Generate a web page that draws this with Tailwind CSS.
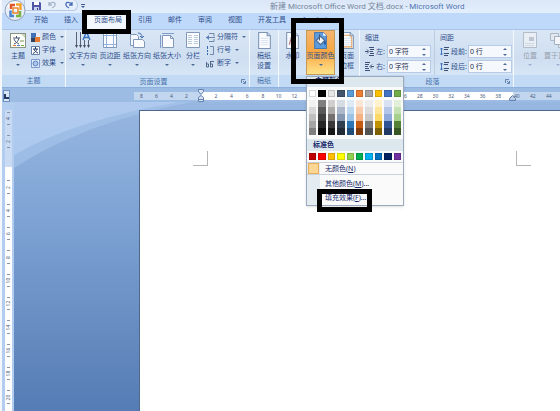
<!DOCTYPE html>
<html lang="zh-CN">
<head>
<meta charset="utf-8">
<title>新建 Microsoft Office Word 文档.docx - Microsoft Word</title>
<script src="https://cdn.jsdelivr.net/npm/@tailwindcss/browser@4"></script>
</head>
<body class="bg-[#f4f8fd] font-['Noto_Sans','Noto_Sans_CJK_SC',sans-serif] text-[7px] leading-[10px] text-[#2f4f8c]">
<svg class="hidden">
  <symbol id="page" viewBox="0 0 16 16"><path d="M2.500 .5h8l3 3v12h-11z" fill="#f9fbfe" stroke="#7d94b5"/><path d="M4.500 6h7M4.500 8h7M4.500 10h7M4.500 12h7" stroke="#dde6f2"/><path d="M10.500 .5v3h3" fill="#cfdcec" stroke="#7d94b5"/></symbol>
  <symbol id="down" viewBox="0 0 4 2"><path d="M0 0h4L2 2z" fill="#4e6a99"/></symbol>
</svg>
<div class="relative flex h-screen flex-col overflow-hidden border-l-2 border-[#f4f8fd] bg-[#bfd9fa]">

  <header class="flex h-[13px] items-center bg-linear-to-b from-[#dbe7f6] to-[#e3effd]">
    <div class="flex h-full w-[268px] shrink-0 items-start pl-[22px]">
      <div class="flex h-[11px] w-[54px] items-center gap-[7px] rounded-r-full border border-t-0 border-[#b5c9e4] bg-[#e6effa] pl-[7px]">
        <button aria-label="保存"><svg class="size-[9px]" viewBox="0 0 9 9"><path d="M0 1h8l1 1v7H0z" fill="#4e56a8"/><path d="M2 1h5v3H2z" fill="#fff"/><path d="M2 6h5v3H2z" fill="#c9d3ee"/><path d="M5 7h1v2H5z" fill="#333b86"/></svg></button>
        <button aria-label="撤消"><svg class="h-[8px] w-[9px]" viewBox="0 0 9 8"><path d="M1 1v3h3M1 4c2-4 7-3 6 0c0 1-1 2-3 3" fill="none" stroke="#a5b4cb" stroke-width="1.300"/></svg></button>
        <button aria-label="恢复"><svg class="h-[8px] w-[9px]" viewBox="0 0 9 8"><path d="M8 1v3H5M8 4c-2-4-7-3-6 0c0 1 1 2 3 3" fill="none" stroke="#4569b6" stroke-width="1.300"/></svg></button>
      </div>
      <button aria-label="自定义快速访问工具栏" class="mt-[4px] ml-[3px] block"><svg class="h-[4px] w-[4px]" viewBox="0 0 4 4"><path d="M0 0h4v1H0zM0 2h4L2 4z" fill="#3c5a91"/></svg></button>
    </div>
    <h1 class="font-[Roboto,'Noto_Sans_CJK_SC',sans-serif] text-[8px] leading-[12px] whitespace-nowrap text-[#74849b]">新建 Microsoft Office Word 文档.docx <span class="text-[#4f74b0]">- Microsoft Word</span></h1>
  </header>

  <nav class="flex h-[16px] items-stretch gap-px pl-[24px] leading-[14px] whitespace-nowrap">
    <a href="#" class="px-[8px]">开始</a>
    <a href="#" class="px-[7px]">插入</a>
    <a href="#" class="rounded-t-sm border border-b-0 border-[#c9d9ee] bg-[#f2f7fd] px-[7px] leading-[12px]">页面布局</a>
    <a href="#" class="px-[7px]">引用</a>
    <a href="#" class="px-[8px]">邮件</a>
    <a href="#" class="px-[7px]">审阅</a>
    <a href="#" class="px-[8px]">视图</a>
    <a href="#" class="px-[7px]">开发工具</a>
    <a href="#" class="px-[8px]">Acrobat</a>
  </nav>

  <button aria-label="Office 按钮" class="absolute top-0 left-[2px]"><svg class="size-[22px]" viewBox="0 0 22 22"><circle cx="11" cy="10.500" r="10" fill="#e8eef7" stroke="#8e9fba"/><ellipse cx="11" cy="6" rx="7.500" ry="4.500" fill="#fbfdff"/><g fill="none" stroke-width="2.500"><path d="M11 5H7v4" stroke="#e0552a"/><path d="M12 4.500h4.500V10" stroke="#f2a32c"/><path d="M6.500 10.500V16H10" stroke="#4a86d0"/><path d="M12 16h4v-5" stroke="#7db245"/><path d="M9 8h5v5H9z" stroke="#e9862e" stroke-width="1.500"/></g></svg></button>

  <section aria-label="功能区" class="flex h-[59px] shrink-0 border-y border-b-[#8eb0dc] border-t-[#a9c4e6] bg-linear-to-b from-[#d9e6f5] via-[#cfdff1] to-[#dcebfb] whitespace-nowrap">
    <div class="flex w-[64px] shrink-0 flex-col border-r border-[#f4f9ff]">
      <div class="flex flex-1 gap-[4px] pl-[7px]">
        <button class="flex w-[18px] flex-col items-center pt-[2px]">
          <svg class="h-[17px] w-[18px]" viewBox="0 0 18 17"><rect x="1.500" y="1.500" width="15" height="14" fill="#fdfdf8" stroke="#8a9282"/><path d="M12 2h4v4" fill="#c8d5bd"/><path d="M4 6h7M7.500 4v2M5 12c3-1 4-3 5-6M5 7c1 3 3 4 5 5" stroke="#45577c" fill="none"/><path d="M11 9h4" stroke="#769a54"/><path d="M4 13.500h3" stroke="#e07c35"/><path d="M8 13.500h3" stroke="#4a82ca"/><path d="M12 13.500h3" stroke="#78ac42"/></svg>
          <span class="pt-[2px]">主题</span><svg class="mt-[3px] h-[2px] w-[4px]"><use href="#down"/></svg>
        </button>
        <div class="flex flex-col gap-[3px] pt-[2px]">
          <button class="flex items-center gap-[2px]"><svg class="size-[9px]" viewBox="0 0 9 9"><path d="M0 0h5v5H0z" fill="#4170b5"/><path d="M5 0h4v4H5z" fill="#e9edf3"/><path d="M4 4h5v5H4z" fill="#e87b32"/><path d="M0 5h4v4H0z" fill="#34425f"/></svg>颜色<svg class="ml-[2px] h-[2px] w-[4px]"><use href="#down"/></svg></button>
          <button class="flex items-center gap-[2px]"><svg class="size-[9px]" viewBox="0 0 9 9"><path d="M.5 .5h8v8h-8z" fill="#fff" stroke="#657fa8"/><path d="M2 3h5M4.500 1v2M2 7.500C5 6 5 5 6 3M3 3c0 2 2 3 4 4" fill="none" stroke="#263b68"/></svg>字体<svg class="ml-[2px] h-[2px] w-[4px]"><use href="#down"/></svg></button>
          <button class="flex items-center gap-[2px]"><svg class="size-[9px]" viewBox="0 0 9 9"><path d="M.5 .5h8v8h-8z" fill="#e2ecfa" stroke="#7b9bce"/><circle cx="4.500" cy="4.500" r="2.500" fill="#aac4eb" stroke="#5b82c0"/></svg>效果<svg class="ml-[2px] h-[2px] w-[4px]"><use href="#down"/></svg></button>
        </div>
      </div>
      <div class="h-[12px] bg-[#c2daf3] text-center leading-[11px] text-[#4a73ae]">主题</div>
    </div>

    <div class="flex w-[184px] shrink-0 flex-col border-r border-[#f4f9ff]">
      <div class="flex flex-1 pl-[2px]">
        <button class="flex w-[30px] flex-col items-center pt-[2px]"><svg class="h-[17px] w-[18px]" viewBox="0 0 18 17"><path d="M2.500 0v14M6.500 0v14M10.500 8v6M14.500 8v6" stroke="#586478"/><path d="M1 13h3l-1.500 3zM5 13h3l-1.500 3zM9 13h3l-1.500 3zM13 13h3l-1.500 3z" fill="#424d60"/><path d="M9 8l3-7h1l3 7M10 5.500h5" fill="none" stroke="#3973bd" stroke-width="1.500"/></svg><span class="pt-[2px]">文字方向</span><svg class="mt-[3px] h-[2px] w-[4px]"><use href="#down"/></svg></button>
        <button class="flex w-[24px] flex-col items-center pt-[2px]"><svg class="h-[17px] w-[14px]" viewBox="0 0 14 17"><path d="M.5 .5h13v15H.5z" fill="#fafcff" stroke="#8298b8"/><path d="M3.500 1v14M10.500 1v14M1 3.500h12M1 12.500h12" stroke="#93b3dc"/></svg><span class="pt-[2px]">页边距</span><svg class="mt-[3px] h-[2px] w-[4px]"><use href="#down"/></svg></button>
        <button class="flex w-[30px] flex-col items-center pt-[2px]"><svg class="h-[17px] w-[18px]" viewBox="0 0 18 17"><path d="M2.500 2.500h6l2 2v9h-8z" fill="#f5f9ff" stroke="#8298b8"/><path d="M5.500 7.500h9l2 2v6h-11z" fill="#fafcff" stroke="#8298b8"/><path d="M10 1c3 0 4 2 4 4M12 4l2 2 2-2" fill="none" stroke="#446fb1"/></svg><span class="pt-[2px]">纸张方向</span><svg class="mt-[3px] h-[2px] w-[4px]"><use href="#down"/></svg></button>
        <button class="flex w-[30px] flex-col items-center pt-[2px]"><svg class="h-[17px] w-[16px]" viewBox="0 0 16 17"><path d="M3.500 3.500h8l3 3v9h-11z" fill="#fafcff" stroke="#8298b8"/><path d="M11.500 3.500v3h3" fill="none" stroke="#8298b8"/><path d="M3 1.500h12M1.500 3v13" stroke="#7f9dca"/></svg><span class="pt-[2px]">纸张大小</span><svg class="mt-[3px] h-[2px] w-[4px]"><use href="#down"/></svg></button>
        <button class="flex w-[22px] flex-col items-center pt-[2px]"><svg class="h-[17px] w-[14px]" viewBox="0 0 14 17"><path d="M.5 .5h13v15H.5z" fill="#fafcff" stroke="#8298b8"/><path d="M2 3.500h4M8 3.500h4M2 5.500h4M8 5.500h4M2 7.500h4M8 7.500h4M2 9.500h4M8 9.500h4M2 11.500h4M8 11.500h4" stroke="#bccadd"/></svg><span class="pt-[2px]">分栏</span><svg class="mt-[3px] h-[2px] w-[4px]"><use href="#down"/></svg></button>
        <div class="flex flex-col gap-[3px] pt-[2px] pl-[2px]">
          <button class="flex items-center gap-[2px]"><svg class="size-[9px]" viewBox="0 0 9 9"><path d="M3 .5h5v3M3 8.500h5V6M0 4.500h9" fill="none" stroke="#7187a9"/><path d="M3 2L0 4.500 3 7z" fill="#5a82bf"/></svg>分隔符<svg class="ml-[2px] h-[2px] w-[4px]"><use href="#down"/></svg></button>
          <button class="flex items-center gap-[2px]"><svg class="size-[9px]" viewBox="0 0 9 9"><path d="M1.500 0v3M1.500 4v2M1.500 7v2" stroke="#3868b2"/><path d="M4 .5h3.500v8H4" fill="none" stroke="#7187a9"/></svg>行号<svg class="ml-[2px] h-[2px] w-[4px]"><use href="#down"/></svg></button>
          <button class="flex items-center gap-[2px]"><svg class="size-[9px]" viewBox="0 0 9 9"><path d="M.5 3v5h2V5H1M4.500 2v6h2V5h-2M5 2.500h3" fill="none" stroke="#52688e"/></svg>断字<svg class="ml-[2px] h-[2px] w-[4px]"><use href="#down"/></svg></button>
        </div>
      </div>
      <div class="flex h-[12px] items-center bg-[#c2daf3] pr-[3px] leading-[11px] text-[#4a73ae]"><span class="flex-1 text-center">页面设置</span><button aria-label="页面设置选项"><svg class="size-[5px]" viewBox="0 0 5 5"><path d="M.5 4V.5H4M2 2l2 2M4.500 2v2.500H2" fill="none" stroke="#6583b1"/></svg></button></div>
    </div>

    <div class="flex w-[29px] shrink-0 flex-col border-r border-[#f4f9ff]">
      <button class="flex flex-1 flex-col items-center pt-[2px]"><svg class="size-[17px]"><use href="#page"/></svg><span class="pt-[2px]">稿纸<br>设置</span></button>
      <div class="h-[12px] bg-[#c2daf3] text-center leading-[11px] text-[#4a73ae]">稿纸</div>
    </div>

    <div class="flex w-[81px] shrink-0 flex-col border-r border-[#f4f9ff]">
      <div class="flex flex-1">
        <button class="flex w-[27px] flex-col items-center pt-[2px]"><svg class="size-[17px]" viewBox="0 0 16 16"><use href="#page"/><path d="M5 12l2-7h1l3 7" fill="none" stroke="#b57272"/></svg><span class="pt-[2px]">水印</span></button>
        <div class="relative w-[29px]">
          <button aria-expanded="true" class="flex h-full w-full flex-col items-center border border-[#c59a56] bg-linear-to-b from-[#f5b66e] via-[#f8a640] to-[#ffe38a] pt-px"><svg class="size-[17px]" viewBox="0 0 16 16"><path d="M2.500 .5h8l3 3v12h-11z" fill="#5c9de0" stroke="#4a78b0"/><path d="M10.500 .5v3h3z" fill="#fff"/><path d="M4 8l4-4 4 4-4 4z" fill="#f4f7fb" stroke="#52698c"/><path d="M7 2v6" stroke="#435779"/><path d="M12 8c2 2 1 4 0 4s-1-2 0-4" fill="#2558a9"/></svg><span class="pt-[2px]">页面颜色</span><svg class="mt-[3px] h-[2px] w-[4px]"><use href="#down"/></svg></button>

          <div role="menu" class="absolute top-[46px] left-0 z-10 w-[98px] border border-[#9aa9bd] bg-[#fafafa] text-[#16296b] shadow-sm">
            <div class="h-[10px] bg-[#dde7ee] pl-[8px] font-bold leading-[8px]">主题颜色</div>
            <div id="theme" class="grid grid-cols-10 gap-x-[2px] px-[2px] pt-[3px]"></div>
            <div id="tints" class="grid grid-cols-10 gap-x-[2px] px-[2px] pt-[3px]"></div>
            <div class="mt-[4px] h-[12px] bg-[#dde7ee] pl-[6px] font-bold leading-[12px]">标准色</div>
            <div id="standard" class="grid grid-cols-10 gap-x-[2px] px-[2px] pt-[2px] pb-[2px]"></div>
            <div class="bg-linear-to-r from-[#e4ecf2] from-[13px] to-[#fafafa] to-[13px]">
              <button role="menuitem" class="flex h-[13px] w-full items-center border-y border-[#c9d2dc]"><span class="mx-px size-[11px] border border-[#e8ad5b] bg-[#fbd793]"></span><span class="pl-[5px]">无颜色(<u>N</u>)</span></button>
              <button role="menuitem" class="block h-[15px] w-full pt-[2px] pl-[18px] text-left">其他颜色(<u>M</u>)...</button>
              <button role="menuitem" class="block h-[15px] w-full pt-px pl-[18px] text-left">填充效果(<u>F</u>)...</button>
            </div>
          </div>
        </div>
        <button class="flex w-[24px] flex-col items-center pt-[2px]"><svg class="size-[17px]" viewBox="0 0 16 16"><use href="#page"/><path d="M4 3h6l2 2v9H4z" fill="none" stroke="#e2a161"/></svg><span class="pt-[2px]">页面<br>边框</span></button>
      </div>
      <div class="h-[12px] bg-[#c2daf3]"></div>
    </div>

    <div class="flex w-[154px] shrink-0 flex-col border-r border-[#f4f9ff]">
      <div id="spacing" class="flex flex-1 gap-[5px] pl-[4px]"></div>
      <div class="flex h-[12px] items-center bg-[#c2daf3] pr-[3px] leading-[11px] text-[#4a73ae]"><span class="flex-1 text-center">段落</span><button aria-label="段落选项"><svg class="size-[5px]" viewBox="0 0 5 5"><path d="M.5 4V.5H4M2 2l2 2M4.500 2v2.500H2" fill="none" stroke="#6583b1"/></svg></button></div>
    </div>

    <div class="flex flex-1 flex-col overflow-hidden text-[#96a0ae]">
      <div class="flex flex-1 pl-[4px]">
        <button class="flex w-[24px] shrink-0 flex-col items-center pt-[2px]" disabled><svg class="h-[17px] w-[14px]" viewBox="0 0 14 17"><path d="M.5 .5h13v15H.5z" fill="#eaeff5" stroke="#b3bdc9"/><path d="M6 5h5v4H6z" fill="#bcc5d0"/><path d="M2 11.500h9M2 13.500h9" stroke="#d1d8e0"/></svg><span class="pt-[2px]">位置</span><svg class="mt-[3px] h-[2px] w-[4px] opacity-40"><use href="#down"/></svg></button>
        <button class="flex w-[32px] shrink-0 flex-col items-center pt-[2px]" disabled><svg class="h-[17px] w-[18px]" viewBox="0 0 18 17"><path d="M1.500 1.500h8v7h-8zM9.500 8.500h7v7h-7z" fill="#e3e8ef" stroke="#aeb8c5"/><path d="M5.500 4.500h8v8h-8z" fill="#f2f5f9" stroke="#a4afbd"/></svg><span class="pt-[2px]">置于顶层</span><svg class="mt-[3px] h-[2px] w-[4px] opacity-40"><use href="#down"/></svg></button>
      </div>
      <div class="h-[12px] bg-[#c2daf3]"></div>
    </div>
  </section>

  <main class="relative flex min-h-0 flex-1 flex-col bg-linear-to-b from-[#9bbae2] via-[#7ea3d4] via-40% to-[#557cb4]">
    <svg class="absolute top-[14px] left-[12px] h-[72px] w-[178px]" viewBox="0 0 178 72"><path d="M0 0h178Q70 20 0 66z" fill="#a9c7ed" opacity=".6"/><path d="M0 0h165Q60 18 0 53z" fill="#b5cff1" opacity=".7"/></svg>
    <div class="relative flex h-[14px] shrink-0 items-start bg-[#9dbce4] pt-[2px]">
      <button aria-label="制表符" class="ml-px flex size-[12px] items-center justify-center border border-[#6d8fc2] bg-[#d7e5f7]"><svg class="size-[5px]" viewBox="0 0 5 5"><path d="M1 0v4h4" fill="none" stroke="#24395f" stroke-width="2"/></svg></button>
      <div class="ml-[124px] flex flex-1 pt-[2px] text-[5px] leading-[8px] text-[#4a5b78]">
        <div id="ruler-left" class="flex h-[8px] w-[67px] bg-[#c2d6f0] pr-[7px]"></div>
        <div class="relative w-0"><svg class="absolute -top-[3px] -left-[4px] h-[14px] w-[8px]" viewBox="0 0 8 14"><path d="M1.500 .5h5v2L4 5.500 1.500 2.500zM4 6.500l2.500 2v4h-5v-4zM1.500 10.500h5" fill="#dbe6f4" stroke="#6281ae"/></svg></div>
        <div id="ruler" class="flex h-[8px] w-[312px] bg-white px-[7px]"></div>
        <div class="relative w-0"><svg class="absolute top-[3px] -left-[4px] z-10 h-[6px] w-[7px]" viewBox="0 0 7 6"><path d="M3.500 .5l3 3v2h-6v-2z" fill="#b8cbe5" stroke="#6281ae"/></svg></div>
        <div id="ruler-right" class="flex h-[8px] flex-1 overflow-hidden bg-[#c2d6f0]"></div>
      </div>
    </div>
    <div class="relative flex min-h-0 flex-1">
      <div class="flex w-[12px] shrink-0 flex-col overflow-hidden bg-[#b3cdf0] px-[3px] pt-[8px] text-[5px] leading-[7px] text-[#4a5b78]">
        <div id="vruler-top" class="h-[57px] w-[7px] shrink-0 bg-[#c9dbf3]"></div>
        <div id="vruler" class="w-[7px] flex-1 bg-white pt-[8px]"></div>
      </div>
      <article contenteditable="true" aria-label="文档" class="mt-[8px] ml-[125px] flex flex-1 justify-between border-t border-l border-[#50688c] bg-white pt-[40px] pr-[29px] pl-[53px]">
        <span class="size-[15px] border-r border-b border-[#b5b5b5]"></span>
        <span class="size-[15px] border-b border-l border-[#b5b5b5]"></span>
      </article>
    </div>
  </main>

  <div class="pointer-events-none absolute top-[10px] left-[80px] z-20 h-[24px] w-[49px] border-[5px] border-black"></div>
  <div class="pointer-events-none absolute top-[18px] left-[289px] z-20 h-[66px] w-[53px] border-[5px] border-black"></div>
  <div class="pointer-events-none absolute top-[189px] left-[315px] z-20 h-[23px] w-[55px] border-[5px] border-black"></div>
</div>

<script>
const $ = id => document.getElementById(id);
const swatch = (c, cls) => `<button aria-label="${c}" class="${cls}" style="background:${c}"></button>`;
const box = 'block h-[7px] border border-black/15';
const plain = 'block h-[7px]';
$('theme').innerHTML = ['#ffffff','#000000','#e7e6e6','#44546a','#5b9bd5','#ed7d31','#a5a5a5','#ffc000','#4472c4','#70ad47'].map(c => swatch(c, box)).join('');
$('standard').innerHTML = ['#c00000','#ff0000','#ffc000','#ffff00','#92d050','#00b050','#00b0f0','#0070c0','#002060','#7030a0'].map(c => swatch(c, box)).join('');
$('tints').innerHTML = [
  '#f2f2f2','#7f7f7f','#d0cece','#d6dce4','#deebf6','#fbe5d5','#ededed','#fff2cc','#d9e2f3','#e2efd9',
  '#d8d8d8','#595959','#aeabab','#adb9ca','#bdd7ee','#f7cbac','#dbdbdb','#fee599','#b4c6e7','#c5e0b3',
  '#bfbfbf','#3f3f3f','#757070','#8496b0','#9cc3e5','#f4b183','#c9c9c9','#ffd965','#8eaadb','#a8d08d',
  '#a5a5a5','#262626','#3a3838','#323f4f','#2e75b5','#c55a11','#7b7b7b','#bf9000','#2f5496','#538135',
  '#7f7f7f','#0c0c0c','#171616','#222a35','#1e4e79','#833c0b','#525252','#7f6000','#1f3864','#375623'
].map(c => swatch(c, plain)).join('');

const cells = a => a.map(n => `<span class="flex-1 text-center">${n}</span>`).join('');
$('ruler-left').innerHTML = cells([8,6,4,2]);
$('ruler').innerHTML = cells(Array.from({length:19}, (_, i) => 2 * i + 2));
$('ruler-right').innerHTML = [40,42,44].map(n => `<span class="w-[16px] shrink-0 pl-px">${n}</span>`).join('');

const tick = '<i class="block h-px w-[3px] bg-[#8794a8]"></i>';
const vcell = (n, h) => `<div class="${h} flex shrink-0 flex-col items-center justify-between py-[5px]">${tick}<span class="flex h-[7px] w-[7px] -rotate-90 items-center justify-center">${n}</span>${tick}</div>`;
$('vruler-top').innerHTML = [4,2].map(n => vcell(n, 'h-[23px] -translate-y-[3px]')).join('');
$('vruler').innerHTML = Array.from({length:10}, (_, i) => vcell(2 * i + 2, i % 3 ? 'h-[23px]' : 'h-[24px]')).join('');

const icons = {
  left: '<path d="M0 4.500h3M2 2.500l2 2-2 2M4 .5h5M5 2.500h4M5 4.500h3M5 6.500h4M4 8.500h5" stroke="#3c4f74" fill="none"/>',
  right: '<path d="M9 4.500H6M7 2.500l-2 2 2 2M0 .5h5M0 2.500h4M0 4.500h3M0 6.500h4M0 8.500h5" stroke="#3c4f74" fill="none"/>',
  space: '<path d="M1.500 1v7M0 2.500L1.500 1 3 2.500M0 6.500L1.500 8 3 6.500" stroke="#4374bb" fill="none"/><path d="M4 .5h5M4 2.500h4M4 6.500h5M4 8.500h4" stroke="#3c4f74"/>'
};
const field = (id, icon, label, value, lw) => `
  <div class="flex items-center">
    <svg class="mr-[2px] size-[9px]" viewBox="0 0 9 9">${icons[icon]}</svg>
    <label for="${id}" class="${lw}">${label}</label>
    <span class="flex h-[13px] w-[44px] items-center border border-[#b7cbe6] bg-[#f5f9fe]">
      <input id="${id}" value="${value}" class="w-[34px] bg-transparent pl-px text-[#1d2b48] outline-none">
      <span class="flex flex-col gap-[4px]">
        <button aria-label="增加" class="block"><svg class="block h-[2px] w-[4px] rotate-180"><use href="#down"/></svg></button>
        <button aria-label="减少" class="block"><svg class="block h-[2px] w-[4px]"><use href="#down"/></svg></button>
      </span>
    </span>
  </div>`;
$('spacing').innerHTML = `
  <div class="flex flex-col gap-[2px] border-r border-[#bccde3] pt-[3px] pr-[3px] pl-px"><span>缩进</span>${field('il','left','左:','0 字符','w-[11px]')}${field('ir','right','右:','0 字符','w-[11px]')}</div>
  <div class="flex flex-col gap-[2px] pt-[3px]"><span>间距</span>${field('sb','space','段前:','0 行','w-[17px]')}${field('sa','space','段后:','0 行','w-[17px]')}</div>`;
</script>
</body>
</html>
